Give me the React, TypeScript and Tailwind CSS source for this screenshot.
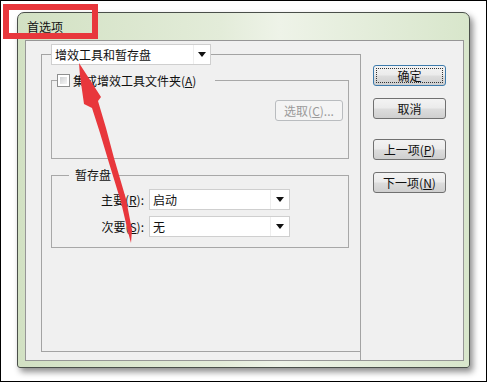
import React from "react";

function Combo({ text, w, arrowW }: { text: string; w: string; arrowW?: string }) {
  return (
    <div className={`flex h-[21px] ${w} items-stretch border border-[#cfcfcf] bg-white`}>
      <span className="flex flex-1 items-center pl-[3px] text-[12px] leading-[14px] text-[#111]">{text}</span>
      <span className={`flex ${arrowW ?? "w-[16px]"} items-center justify-center border-l border-[#eeeeee]`}>
        <svg width="8" height="5" viewBox="0 0 8 5">
          <path d="M0 0 L8 0 L4 5 Z" fill="#111" />
        </svg>
      </span>
    </div>
  );
}

function Btn({ children, focused }: { children: React.ReactNode; focused?: boolean }) {
  return (
    <div
      className={`flex h-[21px] w-[73px] rounded-[3px] border ${
        focused ? "border-[#3d7bad]" : "border-[#707070]"
      } bg-[linear-gradient(180deg,#f3f3f3_0%,#ebebeb_48%,#dddddd_52%,#cfcfcf_100%)] p-[2px]`}
    >
      <div
        className={`flex flex-1 items-center justify-center text-[12px] leading-[14px] text-[#111] ${
          focused ? "border border-dotted border-[#333]" : ""
        }`}
      >
        {children}
      </div>
    </div>
  );
}

export default function App() {
  return (
    <div className="relative h-[382px] w-[487px] overflow-hidden border border-black bg-white font-['Noto_Sans_CJK_SC','Liberation_Sans',sans-serif]">
      {/* window */}
      <div className="ml-[16px] mt-[11px] flex h-[356px] w-[453px] flex-col rounded-b-[3px] rounded-t-[7px] border border-[#4a4f4a] bg-[linear-gradient(90deg,#d2e1c3_0%,#e3ecd9_45%,#eef3e8_58%,#d8e6cb_100%)] shadow-[3px_4px_6px_rgba(0,0,0,0.45)]">
        <div className="flex h-[27px] items-center pl-[9px] text-[12px] leading-[14px] text-[#111]">首选项</div>
        <div className="ml-[7px] flex h-[321px] w-[439px] flex-col border border-[#969696] bg-[#f0f0f0] pt-[13px]">
          <div className="flex flex-1">
            {/* left big group */}
            <div className="ml-[15px] flex h-[298px] w-[319px] flex-col border-b border-l border-t border-[#a3a3a3]">
              <div className="-mt-[11px] ml-[9px]">
                <Combo text="增效工具和暂存盘" w="w-[160px]" arrowW="w-[17px]" />
              </div>
              {/* group 1 */}
              <div className="ml-[9px] mt-[15px] flex h-[79px] w-[298px] flex-col border border-[#a8a8a8]">
                <div className="-mt-[7px] ml-[5px] flex h-[13px] items-center self-start bg-[#f0f0f0] pr-[19px]">
                  <span className="h-[13px] w-[13px] border border-[#8e8f8f] bg-white p-[2px]">
                    <span className="block h-full w-full bg-[linear-gradient(135deg,#cfd1d3,#f5f5f5)]" />
                  </span>
                  <span className="ml-[3px] text-[12px] leading-[14px] text-[#111]">
                    集成增效工具文件夹(<u>A</u>)
                  </span>
                </div>
                <div className="mr-[5px] mt-[13px] flex h-[21px] w-[68px] items-center justify-center self-end rounded-[3px] border border-[#b9bcbf] bg-[#f4f4f4] text-[12px] leading-[14px] text-[#9a9a9a]">
                  选取(<u>C</u>)...
                </div>
              </div>
              {/* group 2 */}
              <div className="ml-[9px] mt-[16px] flex h-[73px] w-[298px] flex-col border border-[#a8a8a8]">
                <div className="-mt-[8px] ml-[17px] flex h-[14px] items-center self-start bg-[#f0f0f0] pl-[6px] pr-[2px] text-[12px] leading-[14px] text-[#111]">
                  暂存盘
                </div>
                <div className="mt-[7px] flex items-center">
                  <span className="w-[92px] text-right text-[12px] leading-[14px] text-[#111]">
                    主要(<u>R</u>):
                  </span>
                  <div className="ml-[5px]">
                    <Combo text="启动" w="w-[141px]" arrowW="w-[19px]" />
                  </div>
                </div>
                <div className="mt-[6px] flex items-center">
                  <span className="w-[92px] text-right text-[12px] leading-[14px] text-[#111]">
                    次要(<u>S</u>):
                  </span>
                  <div className="ml-[5px]">
                    <Combo text="无" w="w-[141px]" arrowW="w-[19px]" />
                  </div>
                </div>
              </div>
            </div>
            {/* right column */}
            <div className="flex flex-1 flex-col border-l border-[#a3a3a3] pl-[12px] pt-[11px]">
              <Btn focused>确定</Btn>
              <div className="mt-[12px]">
                <Btn>取消</Btn>
              </div>
              <div className="mt-[20px]">
                <Btn>
                  上一项(<u>P</u>)
                </Btn>
              </div>
              <div className="mt-[12px]">
                <Btn>
                  下一项(<u>N</u>)
                </Btn>
              </div>
            </div>
          </div>
        </div>
      </div>

      {/* red highlight box */}
      <div className="pointer-events-none absolute left-[2px] top-[3px] h-[35px] w-[95px] border-[6px] border-[#e8373c]" />

      {/* red arrow */}
      <svg
        className="pointer-events-none absolute -left-px -top-px"
        width="487"
        height="382"
        viewBox="0 0 487 382"
      >
        <polygon
          fill="#e8373c"
          points="79,63 92,83 101,97 98,101 106,128 114,158 126,199 132,230 131,243 128,232 121,202 109,163 100,133 92,108 84,104 82,90 80,76"
        />
      </svg>
    </div>
  );
}
